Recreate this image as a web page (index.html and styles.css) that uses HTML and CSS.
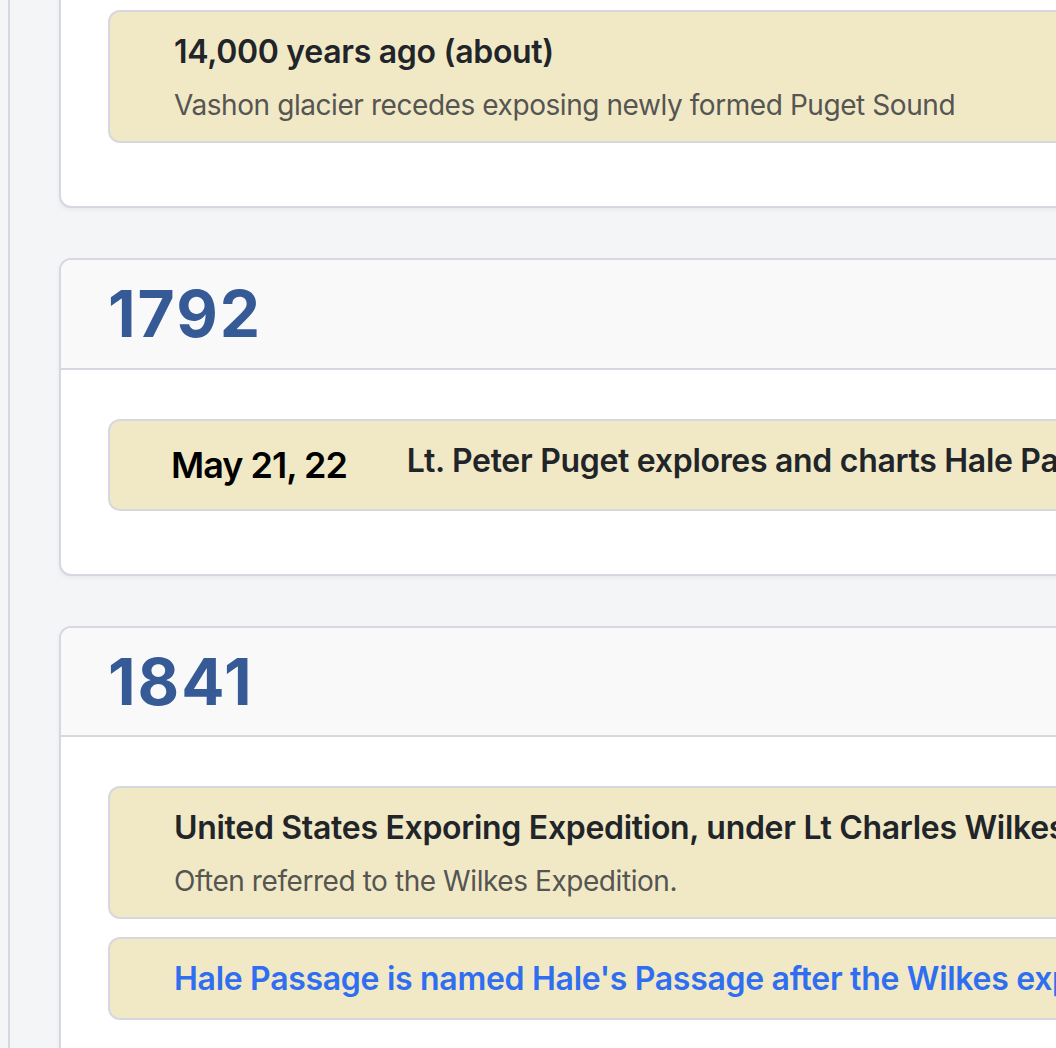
FILE: index.html
```html
<!DOCTYPE html>
<html lang="en">
<head>
<meta charset="utf-8">
<title>Hale Passage Timeline</title>
<link rel="stylesheet" href="styles.css">
</head>
<body>
<div class="page">
  <main class="timeline">
    <section class="card">
      <header class="card-head"><h2 class="year">Prehistory</h2></header>
      <div class="card-body">
        <div class="event">
          <div class="event-main">
            <div class="event-title">14,000 years ago (about)</div>
            <div class="event-desc">Vashon glacier recedes exposing newly formed Puget Sound</div>
          </div>
        </div>
      </div>
    </section>

    <section class="card">
      <header class="card-head"><h2 class="year">1792</h2></header>
      <div class="card-body">
        <div class="event event-dated">
          <div class="event-date">May 21, 22</div>
          <div class="event-main">
            <div class="event-title">Lt. Peter Puget explores and charts Hale Passage</div>
          </div>
        </div>
      </div>
    </section>

    <section class="card">
      <header class="card-head"><h2 class="year">1841</h2></header>
      <div class="card-body">
        <div class="event">
          <div class="event-main">
            <div class="event-title">United States Exporing Expedition, under Lt Charles Wilkes</div>
            <div class="event-desc">Often referred to the Wilkes Expedition.</div>
          </div>
        </div>
        <div class="event">
          <div class="event-main">
            <a class="event-link" href="#">Hale Passage is named Hale's Passage after the Wilkes expedition philologist</a>
          </div>
        </div>
      </div>
    </section>
  </main>
</div>
</body>
</html>
```

FILE: styles.css
```css
html, body {
  overflow: hidden;
}

body {
  margin: 0;
  background: #f4f5f7;
  font-family: Inter, "Noto Sans", "Liberation Sans", sans-serif;
  color: #212529;
}

.page {
  margin-left: 8px;
  border-left: 2px solid #d5d8e0;
  min-height: 1400px;
  padding-left: 49px;
}

.timeline {
  width: 1500px;
  margin-top: -151px;
  display: flex;
  flex-direction: column;
  gap: 50px;
}

.card {
  background: #ffffff;
  border: 2px solid #d5d8e0;
  border-radius: 12px;
  box-shadow: 0 2px 4px rgba(20, 30, 60, 0.06);
  overflow: hidden;
}

.card-head {
  background: #f9f9fa;
  border-bottom: 2px solid #d5d8e0;
  padding: 16px 47px 15px;
}

.year {
  margin: 0;
  font-size: 64px;
  line-height: 1.2;
  font-weight: 700;
  color: #355a96;
  letter-spacing: 2px;
}

.card-body {
  padding: 49px 47px 63px;
  display: flex;
  flex-direction: column;
  gap: 18px;
}

.event {
  background: #f1e9c6;
  border: 2px solid #d5d8e0;
  border-radius: 12px;
  padding: 16px 64px 15px;
  display: flex;
  align-items: flex-start;
  white-space: nowrap;
}

.event-dated {
  padding-left: 61px;
  padding-bottom: 17px;
  gap: 60px;
}

.event-date {
  font-size: 36px;
  line-height: 54px;
  font-weight: 600;
  letter-spacing: -1px;
  color: #000000;
  margin-top: 1px;
}

.event-title {
  font-size: 32px;
  line-height: 48px;
  font-weight: 600;
  letter-spacing: -0.3px;
  color: #212529;
}

.event-desc {
  margin-top: 8px;
  font-size: 28px;
  line-height: 42px;
  letter-spacing: -0.43px;
  color: #555552;
}

.event-link {
  display: block;
  font-size: 32px;
  line-height: 48px;
  font-weight: 600;
  letter-spacing: -0.3px;
  color: #2f6ef0;
  text-decoration: none;
}
```
